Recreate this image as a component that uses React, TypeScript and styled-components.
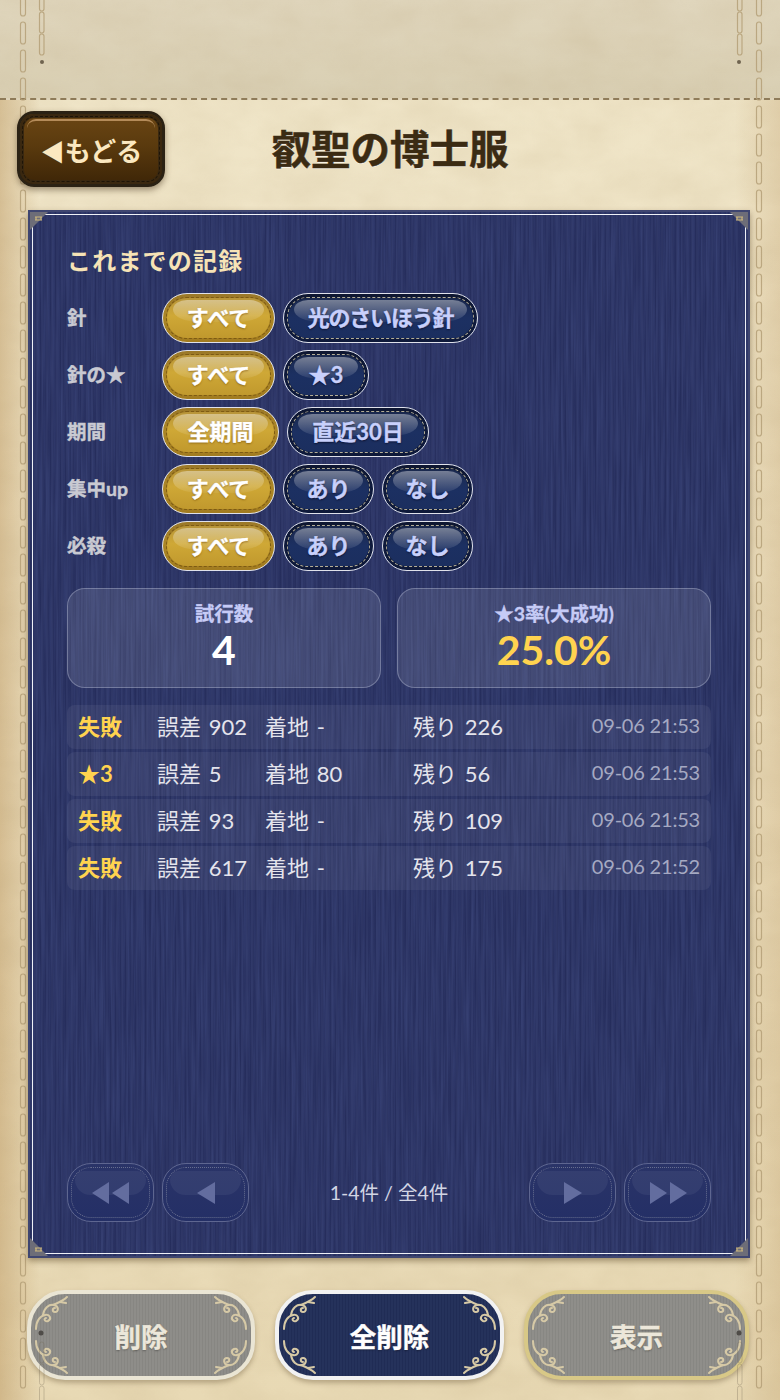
import React from 'react';
import styled, { createGlobalStyle } from 'styled-components';

const FONT = `Lato, 'Noto Sans CJK JP', 'Noto Sans', sans-serif`;

const weave = encodeURIComponent(
  `<svg xmlns="http://www.w3.org/2000/svg" width="722" height="1048"><filter id="w" x="0" y="0" width="100%" height="100%"><feTurbulence type="fractalNoise" baseFrequency="0.4 0.012" numOctaves="3" seed="4"/><feColorMatrix values="0 0 0 0 0.05  0 0 0 0 0.07  0 0 0 0 0.22  0.9 0 0 0 -0.27"/></filter><rect width="722" height="1048" filter="url(#w)"/></svg>`,
);

const GlobalStyle = createGlobalStyle`
  html, body {
    margin: 0;
    padding: 0;
    background: #e8dcbc;
  }
  * {
    box-sizing: border-box;
  }
`;

const Page = styled.div`
  position: relative;
  width: 780px;
  height: 1400px;
  overflow: hidden;
  font-family: ${FONT};
  background:
    linear-gradient(90deg, rgba(186, 148, 92, 0.45) 0, rgba(186, 148, 92, 0) 40px, rgba(186, 148, 92, 0) 735px, rgba(186, 148, 92, 0.25) 780px),
    linear-gradient(180deg, #f0e6c9 0, #ecdfbf 55%, #e8d9b4 100%);
`;

const TopBand = styled.div`
  height: 100px;
  border-bottom: 2px dashed #8d7a58;
  background: linear-gradient(180deg, #e0d6bd 0, #d9cfb3 100%);
`;

const Decor = styled.svg`
  position: absolute;
  left: 0;
  top: 0;
  pointer-events: none;
`;

const TitleBar = styled.header`
  position: relative;
  height: 76px;
  margin-top: 11px;
  padding: 0 17px;
  display: grid;
  grid-template-columns: 1fr auto 1fr;
  align-items: center;
`;

const BackButton = styled.button`
  position: relative;
  justify-self: start;
  width: 148px;
  height: 76px;
  padding: 0 0 0 1px;
  border: 3px solid #2b2214;
  border-radius: 17px;
  background: linear-gradient(180deg, #6b4614 0, #5a3a0e 45%, #3d2507 100%);
  box-shadow: 0 3px 6px rgba(60, 40, 15, 0.45), inset 0 0 0 4px #3a2810;
  color: #fbe8c0;
  font-family: ${FONT};
  font-size: 26px;
  font-weight: 700;
  white-space: nowrap;
  &::before {
    content: '';
    position: absolute;
    inset: 2px;
    border: 1.5px dashed #1d1408;
    border-radius: 13px;
  }
  &::after {
    content: '';
    position: absolute;
    left: 7px;
    right: 7px;
    top: 5px;
    height: 10px;
    border-radius: 9px 9px 0 0;
    border-top: 2px solid rgba(214, 170, 120, 0.7);
  }
`;

const BackArrow = styled.span`
  font-size: 24px;
`;

const Title = styled.h1`
  margin: 0;
  color: #3b2b13;
  font-size: 39.5px;
  font-weight: 700;
  line-height: 1;
  -webkit-text-stroke: 0.5px #3b2b13;
  text-shadow: 0 1px 0 rgba(255, 255, 255, 0.7);
`;

const Panel = styled.main`
  position: relative;
  height: 1048px;
  margin: 23px 30px 0 28px;
  padding: 34px 37px;
  display: flex;
  flex-direction: column;
  border: 2px solid #3f4670;
  background:
    url("data:image/svg+xml,${weave}"),
    repeating-linear-gradient(90deg, rgba(12, 18, 60, 0.14) 0 1px, rgba(255, 255, 255, 0.015) 1px 3px, rgba(12, 18, 60, 0.05) 3px 5px),
    #2a3262;
  box-shadow: 0 3px 6px rgba(70, 50, 20, 0.45);
  &::before {
    content: '';
    position: absolute;
    inset: 2px;
    border: 1.5px solid #eef0f6;
    pointer-events: none;
  }
`;

const CornerMark = styled.svg<{ $x: 'left' | 'right'; $y: 'top' | 'bottom' }>`
  position: absolute;
  ${({ $x }) => $x}: 0;
  ${({ $y }) => $y}: 0;
  width: 18px;
  height: 18px;
  transform: scale(${({ $x }) => ($x === 'right' ? -1 : 1)}, ${({ $y }) => ($y === 'bottom' ? -1 : 1)});
`;

const SectionTitle = styled.h2`
  margin: 0 0 17px;
  color: #f6e3b6;
  font-size: 24px;
  font-weight: 700;
  line-height: 30px;
  letter-spacing: 1.2px;
`;

const Filters = styled.div`
  display: flex;
  flex-direction: column;
  gap: 7px;
`;

const FilterRow = styled.div`
  display: flex;
  align-items: center;
  gap: 8px;
`;

const FilterLabel = styled.div`
  width: 87px;
  padding-bottom: 3px;
  color: #c9cad2;
  font-size: 19.5px;
  font-weight: 700;
  white-space: nowrap;
  -webkit-text-stroke: 0.4px #c9cad2;
`;

const Chip = styled.button<{ $active?: boolean; $minWidth?: number; $tight?: boolean }>`
  position: relative;
  height: 50px;
  width: ${({ $minWidth }) => $minWidth}px;
  padding: 0 0 4px;
  border: 1.5px solid #dfe1ea;
  border-radius: 25px;
  font-family: ${FONT};
  font-size: 22px;
  font-weight: 700;
  letter-spacing: ${({ $tight }) => ($tight ? '-1.2px' : '0')};
  white-space: nowrap;
  color: ${({ $active }) => ($active ? '#ffffff' : '#c8d0fb')};
  -webkit-text-stroke: 0.4px ${({ $active }) => ($active ? '#ffffff' : '#c8d0fb')};
  text-shadow: ${({ $active }) => ($active ? '0 1px 2px rgba(110, 70, 0, 0.7)' : '0 1px 2px rgba(0, 0, 20, 0.7)')};
  background: ${({ $active }) =>
    $active
      ? 'linear-gradient(180deg, #b2903a 0, #cfa836 45%, #be962c 100%)'
      : 'linear-gradient(180deg, #1a2749 0, #1c3062 50%, #1b2e5e 100%)'};
  box-shadow: inset 0 0 0 4px ${({ $active }) => ($active ? 'rgba(120, 84, 16, 0.4)' : 'rgba(6, 12, 34, 0.6)')};
  &::before {
    content: '';
    position: absolute;
    inset: 3px;
    border: 1.5px dashed ${({ $active }) => ($active ? '#7d5a14' : '#b4ae96')};
    border-radius: 20px;
  }
  &::after {
    content: '';
    position: absolute;
    left: 10px;
    right: 10px;
    top: 6px;
    height: 22px;
    border-radius: 16px 16px 30px 30px / 11px 11px 14px 14px;
    background: linear-gradient(180deg, rgba(255, 255, 255, 0.4) 0, rgba(255, 255, 255, 0.06) 100%);
  }
`;

const ChipText = styled.span`
  position: relative;
  z-index: 1;
`;

const Stats = styled.section`
  margin-top: 17px;
  display: grid;
  grid-template-columns: 1fr 1fr;
  gap: 16px;
`;

const StatBox = styled.div`
  height: 100px;
  padding-top: 12px;
  border: 1.5px solid rgba(214, 220, 240, 0.32);
  border-radius: 18px;
  background: rgba(255, 255, 255, 0.11);
  text-align: center;
`;

const StatLabel = styled.div`
  color: #c6cbf6;
  font-size: 19.5px;
  font-weight: 700;
  line-height: 26px;
  -webkit-text-stroke: 0.3px #c6cbf6;
`;

const StatValue = styled.div<{ $accent?: boolean }>`
  color: ${({ $accent }) => ($accent ? '#ffd34f' : '#ffffff')};
  font-size: 41px;
  font-weight: 700;
  line-height: 46px;
`;

const Log = styled.section`
  margin-top: 17px;
  display: flex;
  flex-direction: column;
  gap: 3px;
`;

const LogRow = styled.div`
  height: 44px;
  padding: 0 11px 4px;
  display: grid;
  grid-template-columns: 79px 108px 148px 1fr auto;
  align-items: center;
  border-radius: 8px;
  background: rgba(255, 255, 255, 0.06);
  color: #e4e4ec;
  font-size: 22px;
  word-spacing: 2px;
  white-space: nowrap;
`;

const LogResult = styled.span`
  color: #ffd34f;
  font-weight: 700;
`;

const LogDate = styled.span`
  color: #a5a9c2;
  font-size: 20px;
  word-spacing: 0;
  letter-spacing: -0.2px;
`;

const Pager = styled.nav`
  margin-top: auto;
  display: flex;
  align-items: center;
  gap: 8px;
`;

const PagerInfo = styled.div`
  flex: 1;
  padding-bottom: 3px;
  color: #d3d6e4;
  font-size: 19.5px;
  text-align: center;
`;

const PagerButton = styled.button`
  position: relative;
  width: 87px;
  height: 59px;
  padding: 0;
  display: flex;
  align-items: center;
  justify-content: center;
  border: 1.5px solid #5e6690;
  border-radius: 24px;
  background: linear-gradient(180deg, #2a3468 0, #242f66 100%);
  &::before {
    content: '';
    position: absolute;
    inset: 3px;
    border: 1.5px dotted #666d8e;
    border-radius: 20px;
  }
  &::after {
    content: '';
    position: absolute;
    left: 7px;
    right: 7px;
    top: 7px;
    height: 24px;
    border-radius: 12px 12px 22px 22px;
    background: rgba(255, 255, 255, 0.055);
  }
`;

const PagerIcon = styled.svg`
  position: relative;
  z-index: 1;
  width: 42px;
  height: 24px;
  fill: #636d9f;
`;

const Footer = styled.footer`
  position: relative;
  margin-top: 32px;
  padding: 0 31px 0 27px;
  display: grid;
  grid-template-columns: 228px 229px 225px;
  gap: 20px;
`;

const tones = {
  grey: { fill: '#8c8b87', edge: '#eae5d4', text: '#ece7da' },
  navy: { fill: '#212e58', edge: '#f2f2f2', text: '#ffffff' },
  gold: { fill: '#8d8c88', edge: '#d8c887', text: '#ece7da' },
};

const ActionButton = styled.button<{ $tone: keyof typeof tones }>`
  position: relative;
  height: 90px;
  padding: 0;
  border: 4px solid ${({ $tone }) => tones[$tone].edge};
  border-radius: 38px;
  background:
    repeating-linear-gradient(90deg, rgba(0, 0, 0, 0.04) 0 1px, rgba(255, 255, 255, 0.02) 1px 3px),
    ${({ $tone }) => tones[$tone].fill};
  box-shadow: 0 3px 5px rgba(90, 70, 40, 0.35);
  color: ${({ $tone }) => tones[$tone].text};
  font-family: ${FONT};
  font-size: 26.5px;
  font-weight: 700;
  -webkit-text-stroke: 0.4px ${({ $tone }) => tones[$tone].text};
  text-shadow: 0 1px 2px rgba(0, 0, 0, 0.35);
`;

const Flourish = styled.svg<{ $x: 'left' | 'right'; $y: 'top' | 'bottom' }>`
  position: absolute;
  ${({ $x }) => $x}: 2px;
  ${({ $y }) => $y}: 1px;
  width: 38px;
  height: 38px;
  fill: none;
  stroke: #d6c9a6;
  stroke-width: 2;
  stroke-linecap: round;
  transform: scale(${({ $x }) => ($x === 'right' ? -1 : 1)}, ${({ $y }) => ($y === 'bottom' ? -1 : 1)});
`;

const records = [
  { result: '失敗', error: '902', landing: '-', remain: '226', date: '09-06 21:53' },
  { result: '★3', error: '5', landing: '80', remain: '56', date: '09-06 21:53' },
  { result: '失敗', error: '93', landing: '-', remain: '109', date: '09-06 21:53' },
  { result: '失敗', error: '617', landing: '-', remain: '175', date: '09-06 21:52' },
];

const filters = [
  { label: '針', all: 'すべて', options: [{ text: '光のさいほう針', width: 195, tight: true }] },
  { label: '針の★', all: 'すべて', options: [{ text: '★3', width: 86 }] },
  { label: '期間', all: '全期間', allWidth: 117, options: [{ text: '直近30日', width: 142 }] },
  { label: '集中up', all: 'すべて', options: [{ text: 'あり', width: 91 }, { text: 'なし', width: 91 }] },
  { label: '必殺', all: 'すべて', options: [{ text: 'あり', width: 91 }, { text: 'なし', width: 91 }] },
];

const Ornaments = () => (
  <>
    {(['left', 'right'] as const).flatMap((x) =>
      (['top', 'bottom'] as const).map((y) => (
        <Flourish key={x + y} $x={x} $y={y} viewBox="0 0 38 38">
          <path d="M3 34 C3 26 7 21 12 20 C17 19 19 24 15 26 C12 27 10 24 13 23" />
          <path d="M10 20 C11 13 16 9 21 10 C26 11 26 17 22 17 C19 17 19 13 22 13" />
          <path d="M20 10 C25 8 30 6 34 2" />
          <path d="M27 7 L33 8" />
        </Flourish>
      )),
    )}
  </>
);

const PanelCorner = ({ x, y }: { x: 'left' | 'right'; y: 'top' | 'bottom' }) => (
  <CornerMark $x={x} $y={y} viewBox="0 0 18 18">
    <path d="M0 0 H18 L0 18 Z" fill="#6d6d78" />
    <path d="M5 5 H12 M5 8 H12 M6 5 V8 M11 5 V8" stroke="#cdb77c" strokeWidth="1.2" />
  </CornerMark>
);

const chainYs = [-10, 12, 34];

const Stitches = () => {
  const ys = Array.from({ length: 50 }, (_, i) => i * 28 - 6);
  return (
    <Decor width="780" height="1400" viewBox="0 0 780 1400">
      <defs>
        <filter id="paper" x="0" y="0" width="100%" height="100%">
          <feTurbulence type="fractalNoise" baseFrequency="0.018 0.03" numOctaves="4" seed="7" />
          <feColorMatrix values="0 0 0 0 0.45  0 0 0 0 0.33  0 0 0 0 0.16  0.5 0.5 0 0 -0.32" />
        </filter>
      </defs>
      <rect width="780" height="1400" filter="url(#paper)" opacity="0.28" />
      <g fill="none" stroke="#b5a078" strokeWidth="1.2" opacity="0.85">
        {ys.map((y) => (
          <React.Fragment key={y}>
            <rect x="20.5" y={y} width="5" height="22" rx="2.5" />
            <rect x="756.5" y={y} width="5" height="22" rx="2.5" />
          </React.Fragment>
        ))}
        {chainYs.map((y) => (
          <React.Fragment key={y}>
            <rect x="39.5" y={y} width="4.5" height="21" rx="2.2" />
            <rect x="737.5" y={y} width="4.5" height="21" rx="2.2" />
          </React.Fragment>
        ))}
      </g>
      <circle cx="42" cy="62" r="2" fill="#6f6450" />
      <circle cx="739" cy="62" r="2" fill="#6f6450" />
    </Decor>
  );
};

// the lower chain stitches run over the footer buttons
const LowerStitches = () => (
  <Decor width="780" height="1400" viewBox="0 0 780 1400">
    <g fill="none" stroke="#6f6450" strokeWidth="1" opacity="0.3">
      {chainYs.map((y) => (
        <React.Fragment key={y}>
          <rect x="39.5" y={y + 1352} width="4.5" height="21" rx="2.2" />
          <rect x="737.5" y={y + 1352} width="4.5" height="21" rx="2.2" />
        </React.Fragment>
      ))}
    </g>
    <circle cx="41" cy="1333" r="2.5" fill="#4f4c48" />
    <circle cx="739" cy="1333" r="2.5" fill="#4f4c48" />
  </Decor>
);

const App: React.FC = () => {
  return (
    <Page>
      <GlobalStyle />
      <TopBand />
      <Stitches />
      <TitleBar>
        <BackButton>
          <BackArrow>◀</BackArrow>もどる
        </BackButton>
        <Title>叡聖の博士服</Title>
      </TitleBar>

      <Panel>
        <PanelCorner x="left" y="top" />
        <PanelCorner x="right" y="top" />
        <PanelCorner x="left" y="bottom" />
        <PanelCorner x="right" y="bottom" />

        <SectionTitle>これまでの記録</SectionTitle>

        <Filters>
          {filters.map((filter) => (
            <FilterRow key={filter.label}>
              <FilterLabel>{filter.label}</FilterLabel>
              <Chip $active $minWidth={filter.allWidth ?? 113}>
                <ChipText>{filter.all}</ChipText>
              </Chip>
              {filter.options.map((option) => (
                <Chip key={option.text} $minWidth={option.width} $tight={option.tight}>
                  <ChipText>{option.text}</ChipText>
                </Chip>
              ))}
            </FilterRow>
          ))}
        </Filters>

        <Stats>
          <StatBox>
            <StatLabel>試行数</StatLabel>
            <StatValue>4</StatValue>
          </StatBox>
          <StatBox>
            <StatLabel>★3率(大成功)</StatLabel>
            <StatValue $accent>25.0%</StatValue>
          </StatBox>
        </Stats>

        <Log>
          {records.map((record, index) => (
            <LogRow key={index}>
              <LogResult>{record.result}</LogResult>
              <span>誤差 {record.error}</span>
              <span>着地 {record.landing}</span>
              <span>残り {record.remain}</span>
              <LogDate>{record.date}</LogDate>
            </LogRow>
          ))}
        </Log>

        <Pager>
          <PagerButton aria-label="first">
            <PagerIcon viewBox="0 0 42 24">
              <polygon points="19,1 19,23 2,12" />
              <polygon points="39,1 39,23 22,12" />
            </PagerIcon>
          </PagerButton>
          <PagerButton aria-label="previous">
            <PagerIcon viewBox="0 0 42 24">
              <polygon points="30,1 30,23 12,12" />
            </PagerIcon>
          </PagerButton>
          <PagerInfo>1-4件 / 全4件</PagerInfo>
          <PagerButton aria-label="next">
            <PagerIcon viewBox="0 0 42 24">
              <polygon points="12,1 12,23 30,12" />
            </PagerIcon>
          </PagerButton>
          <PagerButton aria-label="last">
            <PagerIcon viewBox="0 0 42 24">
              <polygon points="3,1 3,23 20,12" />
              <polygon points="23,1 23,23 40,12" />
            </PagerIcon>
          </PagerButton>
        </Pager>
      </Panel>

      <Footer>
        <ActionButton $tone="grey">
          <Ornaments />
          削除
        </ActionButton>
        <ActionButton $tone="navy">
          <Ornaments />
          全削除
        </ActionButton>
        <ActionButton $tone="gold">
          <Ornaments />
          表示
        </ActionButton>
      </Footer>
      <LowerStitches />
    </Page>
  );
};

export default App;
